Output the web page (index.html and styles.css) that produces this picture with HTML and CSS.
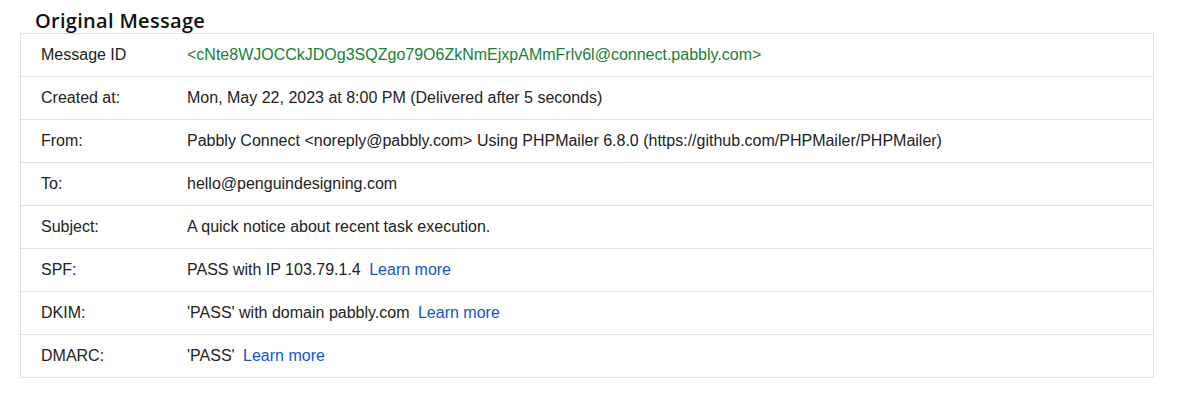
FILE: index.html
```html
<!DOCTYPE html>
<html>
<head>
<meta charset="utf-8">
<link rel="stylesheet" href="styles.css">
</head>
<body>
<div class="wrap">
  <h2 class="title">Original Message</h2>
  <div class="table">
    <div class="row"><div class="label">Message ID</div><div class="value green">&lt;cNte8WJOCCkJDOg3SQZgo79O6ZkNmEjxpAMmFrlv6l@connect.pabbly.com&gt;</div></div>
    <div class="row"><div class="label">Created at:</div><div class="value">Mon, May 22, 2023 at 8:00 PM (Delivered after 5 seconds)</div></div>
    <div class="row"><div class="label">From:</div><div class="value">Pabbly Connect &lt;noreply@pabbly.com&gt; Using PHPMailer 6.8.0 (https://github.com/PHPMailer/PHPMailer)</div></div>
    <div class="row"><div class="label">To:</div><div class="value">hello@penguindesigning.com</div></div>
    <div class="row"><div class="label">Subject:</div><div class="value">A quick notice about recent task execution.</div></div>
    <div class="row"><div class="label">SPF:</div><div class="value">PASS with IP 103.79.1.4 <a class="link" href="#">Learn more</a></div></div>
    <div class="row"><div class="label">DKIM:</div><div class="value">'PASS' with domain pabbly.com <a class="link" href="#">Learn more</a></div></div>
    <div class="row"><div class="label">DMARC:</div><div class="value">'PASS' <a class="link" href="#">Learn more</a></div></div>
  </div>
</div>
</body>
</html>
```
FILE: styles.css
```css
html, body { margin: 0; padding: 0; background: #fff; }
.wrap { padding: 8px 34px 0 20px; }
.title {
  margin: 0 0 0 15px;
  font-family: "Open Sans", "Liberation Sans", sans-serif;
  font-weight: 600;
  font-size: 20px;
  line-height: 25px;
  color: #111;
  letter-spacing: 0.3px;
}
.table {
  border: 1px solid #e0e0e0;
  font-family: "Liberation Sans", Arial, sans-serif;
  font-size: 16px;
  color: #222;
}
.row {
  display: flex;
  align-items: center;
  height: 42px;
  border-top: 1px solid #e0e0e0;
}
.row:first-child { border-top: none; height: 42px; }
.label { width: 146px; padding-left: 20px; flex: none; }
.value { flex: 1; }
.green { color: #188038; }
.link { color: #1155cc; text-decoration: none; margin-left: 4px; }
```
